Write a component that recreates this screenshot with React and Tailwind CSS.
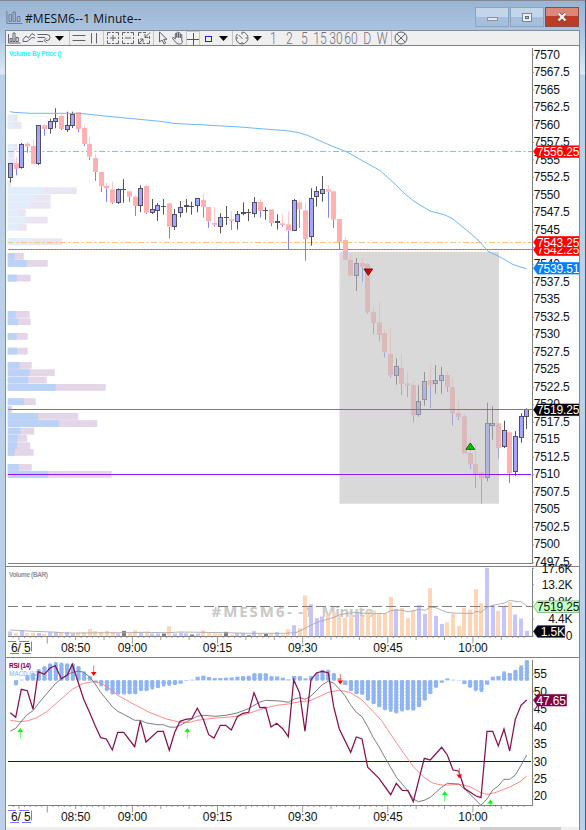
import clsx from 'clsx';

const STEP = 5.675;
const barX = (i) => 10.4 + STEP * i;

// [kind, body top, body bottom, high, low] - u: up, d: down, n: doji
const candles = [
  ['u', 163.3, 178, 163.3, 182.6], ['d', 163.3, 169, 157.3, 175.3], ['u', 144, 167.7, 143, 168.7], ['d', 143.7, 146.3, 141.5, 152.7],
  ['d', 146, 164, 139.5, 164], ['u', 125.3, 164, 125.3, 165], ['d', 125.3, 129, 124, 135.7], ['u', 121.3, 129, 118.7, 133.7],
  ['u', 118, 122, 108.3, 128.3], ['d', 116, 129, 114, 130], ['u', 125.3, 130.3, 111.7, 132], ['u', 114, 125.7, 111.7, 128],
  ['d', 112.3, 129, 112, 132], ['d', 128, 144, 125.3, 146], ['d', 144, 156.7, 137.5, 160], ['d', 158, 172, 153.7, 181],
  ['d', 172, 186.3, 172, 192], ['d', 186, 188.3, 183, 202], ['d', 189.3, 202.7, 181.7, 204], ['u', 189.3, 202.7, 188.3, 204],
  ['n', 189.3, 189.3, 179, 202.7], ['d', 191.3, 196.7, 191.3, 202], ['d', 196.7, 206, 195, 216], ['u', 188.3, 206, 185.3, 212.3],
  ['d', 186, 212.7, 184.7, 214], ['u', 209.3, 213, 199, 214], ['u', 205, 211, 203, 221], ['n', 205.7, 205.7, 199, 214.7],
  ['d', 203.3, 226.7, 203, 238.7], ['u', 214, 227, 209, 230], ['u', 207, 213, 201, 217.3], ['u', 205, 207.3, 199, 212.7],
  ['n', 205.7, 205.7, 201.7, 214.7], ['u', 198.3, 206, 198, 212.3], ['d', 200, 207, 193.7, 217.7], ['d', 207, 221.3, 207, 227.7],
  ['d', 223, 224.7, 207.3, 226.7], ['u', 217.3, 227, 213.3, 233.3], ['n', 217.3, 217.3, 206, 225], ['d', 219.3, 221, 211, 230],
  ['u', 214, 221.7, 211, 229.7], ['u', 212.3, 214, 202.3, 215.3], ['n', 212.3, 212.3, 209, 221], ['u', 202, 214, 197, 217.3],
  ['d', 202, 211, 199, 217.7], ['n', 210.3, 210.3, 207.3, 219.7], ['d', 209.3, 223, 209.3, 226.3], ['u', 221, 223.3, 214.3, 229.7],
  ['d', 223.3, 225, 214.3, 226.7], ['d', 224.3, 230.7, 211.3, 249], ['u', 200, 230.7, 199, 230.7], ['d', 202.3, 209.3, 199.3, 228],
  ['d', 210.3, 239, 202.3, 260.7], ['u', 198.3, 237, 188.3, 245.7], ['u', 191.3, 197, 186.3, 206.7], ['u', 189.3, 193.7, 176, 201.7],
  ['d', 189.3, 191.7, 185.3, 217.7], ['d', 191.3, 219.7, 191, 228], ['d', 219, 242, 219, 249], ['d', 240, 259.7, 237, 259.7],
  ['d', 259.7, 275.7, 254.3, 275.7], ['u', 263, 275.7, 258, 291], ['d', 263, 266.7, 258, 281.7], ['d', 264, 312.3, 263, 313.7],
  ['d', 312, 323, 307, 334.3], ['d', 322.3, 335, 302.3, 341.3], ['d', 333, 352.3, 330, 357.3], ['d', 354, 375.3, 328.3, 377.7],
  ['u', 366, 375.7, 358.3, 384.7], ['d', 368, 384, 354.3, 395.3], ['d', 383.3, 385.3, 372, 397.3], ['d', 385, 415.3, 381, 422],
  ['u', 401, 415.3, 385.3, 416.7], ['u', 381.3, 399.7, 372, 405.7], ['d', 380, 385.3, 365, 408], ['u', 380, 383.7, 365, 393.7],
  ['u', 375, 380.7, 366.7, 393.7], ['d', 375, 387, 372, 392], ['d', 387, 413.3, 378.3, 425.7], ['d', 413, 417, 401.3, 420],
  ['d', 416.3, 453.7, 413.7, 453.7], ['d', 453, 464, 437, 469], ['d', 464, 474.7, 444, 488.3], ['d', 472.3, 478.3, 471, 503.7],
  ['u', 423.3, 478.3, 402.7, 481.3], ['u', 423.3, 425.7, 406.3, 439.7], ['d', 423.3, 448, 423, 458.7], ['u', 430.3, 446.7, 420.7, 448],
  ['d', 432.3, 473.3, 431, 483], ['u', 436.3, 472.3, 431, 475.7], ['u', 416.3, 437.7, 413.3, 442.7], ['u', 409.3, 416.7, 408.3, 429],
];

// [y, width of the first part, full width]
const profileFaded = [
  [114.7, 6.5, 10], [122, 6.5, 14], [144, 6, 10], [151.3, 2, 6.5], [158.7, 2.5, 7.5], [180, 1, 3.5], [187.3, 38, 69], [194.7, 27, 43],
  [201.8, 22, 43], [209.3, 10.5, 18], [216.7, 18, 40], [224, 10.5, 19], [238.4, 24, 54.5],
];
const profile = [
  [253, 7, 16], [260, 19, 40], [274.7, 9, 23], [311, 8, 22], [318.3, 10, 23], [333, 9, 20], [347.7, 9.5, 20], [362, 12, 24],
  [369.3, 22, 47], [376.7, 20.5, 39], [384, 48, 98], [398.3, 16.5, 28], [406, 2, 4.5], [413, 30.5, 70.5], [420.1, 51, 89.5],
  [427.7, 13, 26.5], [435, 10, 19.5], [442.3, 9.5, 22.5], [449, 7, 26], [464, 11, 24], [471, 40.5, 104],
];

// bar kind and bar height x3
const volumes = [
  'b14', 'o9', 'b16', 'o8', 'o10', 'b10', 'o7', 'b12', 'b12', 'o10', 'b13', 'b8', 'o10', 'o11', 'o22', 'o16', 'o12', 'o16', 'o12', 'b8',
  'g16', 'o9', 'o18', 'b12', 'o14', 'b8', 'b8', 'g8', 'o30', 'b8', 'b11', 'b9', 'g5', 'b8', 'o18', 'o9', 'o8', 'o8', 'g13', 'o5',
  'b9', 'b10', 'g3', 'b15', 'o8', 'g7', 'o8', 'b12', 'o5', 'o21', 'b33', 'o24', 'o122', 'b96', 'b54', 'b59', 'o62', 'o72', 'o60', 'o56',
  'o64', 'b72', 'o59', 'o74', 'o77', 'o69', 'o68', 'o118', 'b82', 'o85', 'o54', 'o79', 'b93', 'b67', 'o144', 'b61', 'b37', 'o41', 'o67',
  'o31', 'o86', 'o80', 'o141', 'o99', 'b205', 'b93', 'o76', 'b90', 'o102', 'b65', 'b53', 'b16',
];
const volumeFill = { b: '#c4c4ff', o: '#ffd5b8', g: '#808080' };

// histogram heights x3, positive up
const histogram = [
  0, -18, 2, 19, 22, 37, 45, 51, 58, 56, 52, 51, 46, 30, 15, -6, -21, -32, -45, -45, -45, -44, -43, -33, -33, -30, -26, -21, -19, -17,
  -10, -2, 2, 11, 14, 10, 7, 7, 8, 9, 11, 15, 17, 22, 23, 22, 16, 12, 8, 3, 13, 15, 6, 16, 25, 34, 34, 23, 7, -14, -35, -43, -46, -60,
  -74, -83, -91, -97, -99, -96, -91, -93, -82, -62, -43, -24, -7, 6, 2, 1, -11, -22, -32, -38, -13, 11, 13, 30, 25, 32, 48, 63,
];

const average = '10,111.5 13,112.3 30,113.3 80,113.3 100,115.5 120,117.5 160,121.3 175,123.5 200,124.7 240,127 268,129.3 285,130.5 298,132.5 308,135.5 318,140 333,146.5 347,152 362,160.5 380,170.5 395,184 405,194 415,202 430,211 445,215 453,219 462,226.5 470,233 478,240 488,251.3 500,257 512,264 520,267 526.5,268.5';
const volumeAverage = '10,630 33,631.3 53,632 66,633 130,632.7 143,632.3 167,632.7 180,632 200,632.3 227,632.7 247,633.3 285,633.3 296,632.7 303,629.3 311,625 319,621.7 334,617.3 339,615 345,613.7 351,613 356,612.3 362,613.3 368,613.3 373,614 379,613.3 385,613.7 390,611 396,610 402,610.3 408,611.7 413,611 419,609.3 425,610.3 430,607.3 436,607.7 441,610 447,612.3 453,613 464,613.3 473,613.3 476,611.3 481,612.3 487,607.3 493,605.3 498,604.3 504,603.3 510,600.3 515,601.3 521,601.7 527,606';
const rsi = '10.3,712.7 15.7,717.3 21.3,689.3 27.3,690.7 33,709.3 38.3,671.7 44.3,674.3 50,668 55.3,665.7 61.3,678.7 67.3,675 72.3,664.3 78,681.7 83.7,699.3 89.3,711.7 95.3,726 100.7,737.7 106.3,739 112.3,750 117.7,732.3 123.7,732.3 134.7,746.7 140.3,720.7 146,742 157.7,731.3 163.3,731.3 169.3,750.3 174.7,732.3 180,721.3 185.7,719.3 191.7,718.7 197.3,708.3 203.3,719.3 208.7,734.7 214,738 220.3,725.3 225.7,725.3 231.3,730 237.3,716.7 242.7,713.3 248.7,712.3 254,692.7 260,707.7 265.7,707.3 271,727 276.7,723.3 282.7,728.7 288.3,736.7 293.7,679.7 299.7,693.3 305,731.3 311,679.7 316.7,672.7 322.3,671.3 328.3,673 333.7,706.7 339.3,729 350.7,752.3 356.3,737 362,739 367.7,767.3 379,778.3 390.7,794.7 396.3,783.3 402.3,790.3 408,790.7 413.3,801.7 424.3,758.3 430.3,760 441.7,747.3 447.3,755 453,770 458.7,771 464.3,788.3 476,796 481,797.7 487,731.3 492.7,731.3 498.3,746 504,729 509.7,751 515.3,719.3 521,705.3 526.7,700';
const macd = '10.3,731 15.7,728.3 26.7,715 33,710.7 38.3,703.7 55.3,683.7 61.3,679 70,673.3 78.3,671 83.7,672.3 89.3,676.7 95,683.7 100.7,692.3 112.3,706.7 117.7,711.3 123.7,714.3 134.7,720.3 140.3,720.3 146.7,723 157.7,724.7 163.3,724.7 169.3,727 174.7,727.3 180,725.5 186.7,721.7 197.3,716.3 203.3,715.3 215,716.3 225.7,715.3 237,713 248.3,708.7 260,702 265.7,700.3 280,701 288.3,702.3 295,698.7 299.7,697.7 305,699.3 311,696 322.3,684.7 328.3,681.3 333.7,683 339.3,689 345,695.7 350.7,705 356.3,712.3 362,716.7 367.7,726.7 373.3,737.7 379,746.7 385,757.7 396.7,777.7 407.3,790 413.3,799 418.3,801.7 424.3,800.3 430.3,797.3 441.7,787.3 447.3,783.3 458.7,784 465,789.3 481,805.3 487,799 492.7,790 498.3,786 504,779.3 509.7,779.3 515.3,775 521,765.3 526.7,755';
const signal = '10.3,720.3 20,721.7 28.3,720.7 36.7,717.7 46.7,711.7 60,700 72.3,689.3 83.7,683.3 93.3,681.7 100.7,683 108.3,687.7 117.7,695.3 133.3,704 150,712.7 166.7,719 180,722.3 190,722.3 196.7,720.3 213.3,718.3 237,716.3 246.7,714 265.7,708 276.7,705.3 288.3,704 299.7,701.7 310,700.7 320,696.3 328.3,692.3 339.3,690.3 350,692.3 362,700 373.3,711.7 381.7,720.7 396.7,743.3 413.3,766.7 424.3,777.7 433.3,783.3 443.3,785.3 460,784.3 470,786.7 481,792.7 487,794.3 495,792.7 509.7,787 520,781.7 526.7,776';

const times = [
  [75.6, '08:50'], [132.3, '09:00'], [217.5, '09:15'], [302.6, '09:30'], [387.8, '09:45'], [473, '10:00'],
];
const prices = Array.from({ length: 30 }, (_, i) => 7570 - i * 2.5);

function Label({ x, y, children, fill = '#111', anchor = 'start' }) {
  return (
    <text x={x} y={y + 4.3} fill={fill} textAnchor={anchor} fontSize="12" letterSpacing="-0.15" fontFamily="Liberation Sans, Arial, sans-serif">
      {children}
    </text>
  );
}

function Tag({ y, right = 579, fill, stroke = fill, color = '#fff', half = 5.8, x = 537, children }) {
  return (
    <g>
      <path d={`M533.5 ${y} L537.5 ${y - half} H${right} V${y + half} H537.5 Z`} fill={fill} stroke={stroke} strokeWidth="0.6" />
      <Label x={x} y={y} fill={color}>{children}</Label>
    </g>
  );
}

function TimeAxis({ y }) {
  const ticks = Array.from({ length: 91 }, (_, i) => i - 21);
  return (
    <g>
      <path d={`M8 ${y} H533`} stroke="#808080" />
      {ticks.map((k) => {
        const len = k % 15 === 0 ? 7 : k % 5 === 0 ? 3.5 : 1.5;
        return <path key={k} d={`M${132.4 + k * STEP} ${y} v${len}`} stroke="#808080" strokeWidth="0.8" />;
      })}
      {times.map(([x, t]) => <Label key={t} x={x} y={y + 11.2} anchor="middle">{t}</Label>)}
      <Label x={11} y={y + 11.2}>6/ 5</Label>
      <path d={`M8 ${y + 5} h8 m3 0 h10 M10 ${y + 17} h9 m3 0 h9 M31.5 ${y + 5} v10`} stroke="#7777ff" fill="none" />
    </g>
  );
}

function Candle({ i, data }) {
  const [kind, top, bottom, high, low] = data;
  const x = Math.round(barX(i) - 0.55) + 0.5;
  if (kind === 'd') {
    return (
      <g>
        <path d={`M${x} ${high} V${top}`} stroke="#ffc8c8" />
        <path d={`M${x} ${bottom} V${low}`} stroke="#8080ff" />
        <rect x={x - 2.5} y={top} width="5" height={bottom - top} fill="#ffb0b0" />
      </g>
    );
  }
  const y1 = Math.round(top) + 0.5;
  const y2 = Math.max(Math.round(bottom) - 0.5, y1 + 1);
  if (kind === 'n') {
    return <path d={`M${x} ${high} V${low} M${x - 2.5} ${y1} h5`} stroke="#555" />;
  }
  return (
    <g>
      <path d={`M${x} ${high} V${low}`} stroke="#555" />
      <rect x={x - 2} y={y1} width="4" height={y2 - y1} fill="#a5a5ff" stroke="#4f4f66" />
    </g>
  );
}

function PricePanel() {
  return (
    <svg className="block shrink-0" width="573" height="520" viewBox="6 46 573 520">
      <text x="9" y="56.3" fontSize="6.5" fontWeight="bold" fill="#25f5fa" textLength="52.5" fontFamily="Liberation Sans, Arial, sans-serif">Volume By Price ()</text>
      {[[profileFaded, '#e2edfb', '#e9e5f2'], [profile, '#bad2f6', '#e3d6e8']].map(([rows, a, b]) =>
        rows.map(([y, w, full]) => (
          <g key={y}>
            <rect x="7.7" y={y} width={full} height="6.8" fill={b} />
            <rect x="7.7" y={y} width={w} height="6.8" fill={a} />
          </g>
        ))
      )}
      <path d="M8 151.5 H533" stroke="#80bfff" strokeDasharray="6 2.5 2 2.5" />
      <path d="M8 242.5 H533" stroke="#ffbe80" strokeDasharray="6 2.5 2 2.5" />
      <path d="M8 249.5 H533" stroke="#8f6fe0" />
      <path d="M8 249.5 H533" stroke="#b48fc8" strokeDasharray="1 2" />
      {candles.map((c, i) => <Candle key={i} i={i} data={c} />)}
      <rect x="339.5" y="251.7" width="159.5" height="252" fill="#c0c0c0" fillOpacity="0.6" />
      <path d="M8 409.5 H533" stroke="#85852b" />
      <path d="M8 409.5 H12" stroke="#888" />
      <path d="M8 474.5 H531" stroke="#8c1aff" />
      <polyline points={average} fill="none" stroke="#70b7f8" />
      <path d="M364 269 h8.6 l-4.3 6.3 z" fill="#f00" stroke="#400" strokeWidth="0.9" />
      <path d="M366.5 270.5 h3.6 l-1.8 2 z" fill="#a00" />
      <path d="M466 449.3 h8.6 l-4.3 -6.3 z" fill="#0e0" stroke="#040" strokeWidth="0.9" />
      <circle cx="470.3" cy="447" r="1.3" fill="none" stroke="#050" strokeWidth="0.6" />

      <path d="M532.5 48 V564" stroke="#808080" />
      <path d="M8 563.5 H533" stroke="#808080" />
      {prices.map((p, i) => (
        <g key={p}>
          <path d={`M532 ${54.9 + i * 17.5} h2`} stroke="#808080" strokeWidth="0.8" />
          <Label x={533.8} y={54.4 + i * 17.48}>{p}</Label>
        </g>
      ))}
      <Tag y={151.6} fill="#f00">7556.25</Tag>
      <Tag y={249.7} fill="#f00">7542.25</Tag>
      <Tag y={242.3} fill="#f00">7543.25</Tag>
      <Tag y={268.3} fill="#0080ff">7539.51</Tag>
      <Tag y={409.8} fill="#000">7519.25</Tag>
    </svg>
  );
}

function VolumePanel() {
  return (
    <svg className="block shrink-0 overflow-visible border-t border-[#808080]" width="573" height="91" viewBox="6 567 573 90">
      <text x="9" y="576.5" fontSize="6.5" fontWeight="bold" fill="#909090" textLength="39" fontFamily="Liberation Sans, Arial, sans-serif">Volume (BAR)</text>
      <text y="616.5" fontSize="15" fontWeight="bold" fill="#c8c8c8" fontFamily="Open Sans, sans-serif">
        <tspan x="211.5" textLength="73">#MESM6</tspan>
        <tspan x="287" textLength="16">--</tspan>
        <tspan x="304">1 </tspan>
        <tspan x="321.5" textLength="52">Minute</tspan>
      </text>
      {volumes.map((v, i) => {
        const h = Number(v.slice(1)) / 3;
        return <rect key={i} x={Math.round(barX(i) - 2.05)} y={636.2 - h} width="4" height={h} fill={volumeFill[v[0]]} />;
      })}
      <path d="M8 606.5 H533" stroke="#808080" strokeDasharray="10 4" />
      <polyline points={volumeAverage} fill="none" stroke="#a9a9a9" strokeWidth="0.9" />
      <TimeAxis y={636.5} />
      <path d="M532.5 568 V636.5" stroke="#808080" />
      {[[568.3, '17.6K'], [585, '13.2K'], [602, '8.8K'], [619, '4.4K'], [636, '0']].map(([y, t]) => (
        <g key={t}>
          <path d={`M532 ${y} h2`} stroke="#808080" strokeWidth="0.8" />
          <Label x={572.3} y={y} anchor="end">{t}</Label>
        </g>
      ))}
      <Tag y={606.7} fill="#c0ffc0" stroke="#5b8f5b" color="#111">7519.25</Tag>
      <Tag y={631.5} fill="#000" stroke="#00008b" right={564.7} x={540.7}>1.5K</Tag>
    </svg>
  );
}

function Arrow({ x, y, down }) {
  return down ? (
    <g>
      <path d={`M${x} ${y - 10.5} v9`} stroke="#ff5a5a" strokeWidth="0.9" />
      <path d={`M${x - 2.8} ${y - 4} h5.6 l-2.8 4 z`} fill="#f00" />
    </g>
  ) : (
    <g>
      <path d={`M${x} ${y + 10.5} v-9`} stroke="#4f4" strokeWidth="0.9" />
      <path d={`M${x - 2.8} ${y + 4} h5.6 l-2.8 -4 z`} fill="#0f0" />
    </g>
  );
}

// stacked dots for tall bars, a flat block for the short ones
function HistogramBar({ i, value }) {
  const h = value / 3;
  if (Math.abs(h) < 5) {
    return <path d={`M${barX(i)} 680.4 v${-h}`} stroke="#8fb4f3" strokeWidth="4.2" />;
  }
  const s = Math.sign(h);
  return (
    <g stroke="#8fb4f3">
      <path d={`M${barX(i)} 680.4 v${-h + s}`} strokeWidth="3.4" />
      <path d={`M${barX(i)} ${680.4 - s * 2} v${-h + s * 4 - s * 0.1}`} strokeWidth="4.6" strokeLinecap="round" strokeDasharray="0.01 3.2" />
    </g>
  );
}

function RsiPanel() {
  return (
    <svg className="block shrink-0 border-t border-[#808080]" width="573" height="170" viewBox="6 658 573 169">
      <text x="9" y="676" fontSize="6.5" fontWeight="bold" fill="#a9c8f8" textLength="29" fontFamily="Liberation Sans, Arial, sans-serif">MACD (12</text>
      {histogram.map((h, i) => h !== 0 && <HistogramBar key={i} i={i} value={h} />)}
      <text x="9" y="668" fontSize="6.5" fontWeight="bold" fill="#800040" textLength="22" fontFamily="Liberation Sans, Arial, sans-serif">RSI (14)</text>
      <path d="M8 761.5 H531" stroke="#0a0ad0" />
      <polyline points={signal} fill="none" stroke="#ff7c7c" strokeWidth="0.9" />
      <polyline points={macd} fill="none" stroke="#6e6e6e" strokeWidth="0.9" />
      <polyline points={rsi} fill="none" stroke="#86104f" strokeWidth="1.25" />
      <Arrow x={93.7} y={676} down />
      <Arrow x={340.3} y={684.5} down />
      <Arrow x={459.3} y={778.5} down />
      <Arrow x={20.3} y={728} />
      <Arrow x={187.3} y={728} />
      <Arrow x={444.7} y={791} />
      <g>
        <path d="M490.3 805.5 v-4" stroke="#4f4" />
        <path d="M487.5 803.5 h5.6 l-2.8 -4 z" fill="#0f0" />
      </g>
      <TimeAxis y={805.5} />
      <path d="M532.5 660 V806" stroke="#808080" />
      {[55, 50, 45, 40, 35, 30, 25, 20].map((v, i) => (
        <g key={v}>
          <path d={`M532 ${674 + i * 17.45} h2`} stroke="#808080" strokeWidth="0.8" />
          <Label x={533.8} y={674 + i * 17.45}>{v}</Label>
        </g>
      ))}
      <Tag y={700.2} fill="#800040" right={566.5} x={536.5}>47.65</Tag>
    </svg>
  );
}

function Icon({ children }) {
  return (
    <svg className="shrink-0" width="14" height="14" viewBox="0 0 14 14" fill="none" stroke="#62626c" strokeWidth="1">
      {children}
    </svg>
  );
}

function Cell({ w, children, className }) {
  return <div className={clsx('flex h-full shrink-0 items-center justify-center', w, className)}>{children}</div>;
}

const Caret = ({ w }) => (
  <Cell w={w}>
    <svg width="9" height="5" viewBox="0 0 9 5"><path d="M0 0 h9 l-4.5 5 z" fill="#000" /></svg>
  </Cell>
);

const Sep = ({ w }) => (
  <Cell w={w}><div className="h-[14px] w-px bg-[#c4c4c4]" /></Cell>
);

const Period = ({ w, children }) => (
  <Cell w={w} className="font-['Roboto'] text-[16px] leading-[15px] font-light text-[#6f6f7a]">
    <span className="inline-block origin-center scale-x-[0.76]">{children}</span>
  </Cell>
);

function Toolbar() {
  return (
    <div className="flex h-[15px] shrink-0 items-center border-b border-[#808080] bg-[#efefef]">
      <Cell w="w-[15px]"><Icon><path d="M1.5 3 V12 H13.5 M3 10.5 V7.5 h2 v3 z M6 10.5 V2 h2 v8.5 z M9 10.5 V6.5 h2.3 v4 z" /></Icon></Cell>
      <Cell w="w-[15px]"><Icon><path d="M1 8.5 L4 5 6.5 7 10 2.5 13 4.5 M1 10.5 L5 10.5 7 9 10 6.5 13 7 M1 8.5 v2" /></Icon></Cell>
      <Cell w="w-[16px]"><Icon><path d="M0.5 3.5 H10 a2.7 2.7 0 0 1 0 6 H9 M0.5 6.5 H8 M0.5 10.5 H6 M9.5 7 L7 9.5 9.5 11.5" /></Icon></Cell>
      <Caret w="w-[15px]" />
      <Sep w="w-[4px]" />
      <Cell w="w-[15px]"><Icon><path d="M0.5 4.5 H13.5 M0.5 9.5 H13.5" /></Icon></Cell>
      <Cell w="w-[16px]"><Icon><path d="M4.5 2 V12.5 M9.5 2 V12.5" /></Icon></Cell>
      <Sep w="w-[3px]" />
      <Cell w="w-[15px]"><Icon><path d="M4.5 1.5 H1.5 V4.5 M9.5 1.5 H12.5 V4.5 M4.5 12.5 H1.5 V9.5 M9.5 12.5 H12.5 V9.5 M6 1.5 h2 M6 12.5 h2 M1.5 6 v2 M12.5 6 v2 M4 7 h6 M7 4 v6" /></Icon></Cell>
      <Cell w="w-[16px]"><Icon><path d="M4.5 1.5 H1.5 V4.5 M9.5 1.5 H12.5 V4.5 M4.5 12.5 H1.5 V9.5 M9.5 12.5 H12.5 V9.5 M6 1.5 h2 M6 12.5 h2 M1.5 6 v2 M12.5 6 v2 M4 7 h6" /></Icon></Cell>
      <Cell w="w-[16px]"><Icon><path d="M4.5 1.5 H1.5 V5 M1.5 8 V12.5 H4.5 M9.5 12.5 H12.5 V9.5 M6 1.5 h3 M6 12.5 h2 M13 1.5 L8 6.5 M8 3 V6.5 H11.5 M1.5 12.5 L6 8 M6 11.5 V8 H3 M12.5 5 v3" /></Icon></Cell>
      <Sep w="w-[3px]" />
      <Cell w="w-[15px]"><Icon><path d="M3.5 1 V11 L6 9 8 13 9.7 12 7.7 8.3 H11 Z" /></Icon></Cell>
      <Cell w="w-[16px]"><Icon><path d="M4.5 11 L1.5 7.5 C1 6.5 2.3 6 3 6.8 L4.3 8 V3 c0-1 1.5-1 1.5 0 V6.5 V1.8 c0-1 1.7-1 1.7 0 V6.5 V2.4 c0-1 1.7-1 1.7 0 V7 V4 c0-1 1.6-1 1.6 0 V9 C12.3 12 10.5 13 8.5 13 6.5 13 5.3 12.3 4.5 11 Z" /></Icon></Cell>
      <Cell w="w-[14px]" className="border-x border-t border-[#c9c9c9] bg-[#f4f4f4]"><Icon><path d="M1 7.5 H13 M7.5 1 V13" stroke="#555" /></Icon></Cell>
      <Cell w="w-[16px]"><div className="mt-px h-[6px] w-[7px] border border-[#1a1aff]" /></Cell>
      <Caret w="w-[15px]" />
      <Sep w="w-[3px]" />
      <Cell w="w-[15px]"><Icon><path d="M7 1 A6 6 0 1 1 2.5 3 M7 1 V3.5 M3.8 4 L7.5 7.8 M10.5 7 h2 M7 11 v2 M1.5 7 h1.5" /></Icon></Cell>
      <Caret w="w-[16px]" />
      <Period w="w-[17px]">1</Period>
      <Period w="w-[14px]">2</Period>
      <Period w="w-[16px]">5</Period>
      <Period w="w-[16px]">15</Period>
      <Period w="w-[15px]">30</Period>
      <Period w="w-[16px]">60</Period>
      <Period w="w-[16px]">D</Period>
      <Period w="w-[14px]">W</Period>
      <Sep w="w-[4px]" />
      <Cell w="w-[15px]"><Icon><circle cx="7" cy="7" r="6" /><path d="M2.8 2.8 L11.2 11.2 M11.2 2.8 L2.8 11.2" /></Icon></Cell>
    </div>
  );
}

function TitleBar() {
  const button = 'flex h-[20px] w-[34px] items-center justify-center border';
  return (
    <div className="flex h-[28px] shrink-0 items-start">
      <svg className="mt-[8px] shrink-0" width="17" height="15" viewBox="0 0 17 15" fill="none" stroke="#6f7f93">
        <path d="M0.9 1 V13.5 H16.5 M3 11.5 V4.5 h2.4 v7 z M7 11.5 V2 h2.4 v9.5 z M11.3 11.5 V6.5 h2.7 v5 z" />
      </svg>
      <span className="mt-[8px] ml-[2px] grow font-['Open_Sans'] text-[12px] leading-[18px] tracking-[0.12px] whitespace-nowrap text-[#111]">#MESM6--1 Minute--</span>
      <div className="mt-[5px] mr-px flex gap-px">
        <div className={clsx(button, 'border-[#8aa4c2] bg-linear-to-b from-[#c3d5e9] from-50% to-[#a5bfdc] to-50%')}>
          <div className="mt-[3px] h-[4px] w-[11px] border border-[#8492a2] bg-[#e8e8e8]" />
        </div>
        <div className={clsx(button, 'border-[#8aa4c2] bg-linear-to-b from-[#c3d5e9] from-50% to-[#a5bfdc] to-50%')}>
          <div className="flex h-[9px] w-[10px] items-center justify-center border border-[#7d8794] bg-[#f0f0f0]">
            <div className="h-[3px] w-[4px] border border-[#55708f] bg-[#a5bfdc]" />
          </div>
        </div>
        <div className={clsx(button, 'border-[#8b4a45] bg-linear-to-b from-[#dc8878] from-45% to-[#bc3c26] to-45%')}>
          <svg width="12" height="10" viewBox="0 0 12 10">
            <path d="M2.5 1.5 L9.5 8.5 M9.5 1.5 L2.5 8.5" stroke="#6b4a4a" strokeWidth="3.6" />
            <path d="M2.5 1.5 L9.5 8.5 M9.5 1.5 L2.5 8.5" stroke="#f3f0f0" strokeWidth="2.4" />
          </svg>
        </div>
      </div>
    </div>
  );
}

function App() {
  return (
    <div className="h-[830px] w-[586px] overflow-hidden border-t border-r border-t-[#85898f] border-r-[#1d6b7c] bg-[linear-gradient(#9ab5d4_0px,#a9c3df_28px,#dce9f6_73px,#bad1e9_74px)]">
      <div className="flex h-full flex-col pr-[5px] pl-[6px] pt-px">
        <TitleBar />
        <div className="-ml-px flex grow flex-col border-t border-r border-l border-[#858b93] bg-white">
          <Toolbar />
          <PricePanel />
          <VolumePanel />
          <RsiPanel />
          <div className="flex grow justify-end bg-[#efefef] pr-[18px]">
            <div className="h-full w-[81px] bg-[#cdcdcd]" />
          </div>
        </div>
      </div>
    </div>
  );
}

export default App;
